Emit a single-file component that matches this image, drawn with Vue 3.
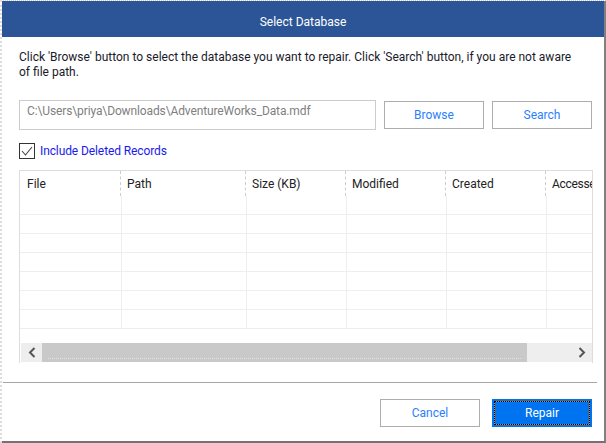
<template>
  <div class="page">
    <div class="dialog">
      <div class="title-bar">Select Database</div>

      <div class="content">
        <p class="intro">Click 'Browse' button to select the database you want to repair. Click 'Search' button, if you are not aware of file path.</p>

        <div class="path-row">
          <input class="path-input" type="text" :value="filePath" readonly />
          <button class="btn browse">Browse</button>
          <button class="btn search">Search</button>
        </div>

        <label class="deleted-check">
          <span class="check-box">
            <svg width="14" height="14" viewBox="0 0 14 14">
              <path d="M2 7 L5.5 11 L12 3" fill="none" stroke="#444" stroke-width="1.1" />
            </svg>
          </span>
          <span>Include Deleted Records</span>
        </label>

        <div class="grid-box">
          <div class="grid-head">
            <div v-for="col in columns" :key="col" class="head-cell">{{ col }}</div>
          </div>
          <div class="grid-body">
            <div v-for="row in 7" :key="row" class="grid-row">
              <div v-for="col in columns" :key="col" class="body-cell"></div>
            </div>
          </div>
          <div class="scroll-bar">
            <div class="scroll-btn">
              <svg width="8" height="11" viewBox="0 0 8 11">
                <path d="M6.5 1 L2 5.5 L6.5 10" fill="none" stroke="#555" stroke-width="2" />
              </svg>
            </div>
            <div class="scroll-thumb"><div class="thumb-dots"></div></div>
            <div class="scroll-rest"></div>
            <div class="scroll-btn">
              <svg width="8" height="11" viewBox="0 0 8 11">
                <path d="M1.5 1 L6 5.5 L1.5 10" fill="none" stroke="#555" stroke-width="2" />
              </svg>
            </div>
          </div>
        </div>
      </div>

      <div class="footer">
        <button class="btn cancel">Cancel</button>
        <button class="btn repair"><span class="focus-ring">Repair</span></button>
      </div>
    </div>
  </div>
</template>

<script setup>
const filePath = 'C:\\Users\\priya\\Downloads\\AdventureWorks_Data.mdf';
const columns = ['File', 'Path', 'Size (KB)', 'Modified', 'Created', 'Accessed'];
</script>

<style scoped>
.page {
  width: 606px;
  height: 443px;
  box-sizing: border-box;
  border-top: 1px dotted #ccc;
  border-left: 2px dotted #ddd;
}

.dialog {
  width: 604px;
  height: 442px;
  box-sizing: border-box;
  background: #fff;
  border-right: 2px solid #808080;
  border-bottom: 2px solid #737373;
  display: flex;
  flex-direction: column;
  font-family: Roboto, "Noto Sans", sans-serif;
  font-size: 12px;
  color: #222;
}

.title-bar {
  height: 36px;
  flex: none;
  background: #2b5597;
  color: #fff;
  text-align: center;
  line-height: 43px;
}

.content {
  padding: 13px 8px 0 17px;
}

.intro {
  margin: 0;
  line-height: 15px;
  color: #1a1a2a;
  width: 565px;
}

.path-row {
  display: flex;
  align-items: center;
  margin-top: 20px;
}

.path-input {
  width: 357px;
  height: 30px;
  box-sizing: border-box;
  border: 1px solid #ccc;
  padding: 0 0 8px 7px;
  font: inherit;
  letter-spacing: -0.12px;
  color: #808080;
  outline: none;
}

.btn {
  width: 100px;
  height: 28px;
  box-sizing: border-box;
  background: #fff;
  border: 1px solid #adadad;
  color: #2a7fff;
  font: inherit;
  padding: 0;
}

.browse {
  margin-left: 8px;
}

.search {
  margin-left: 8px;
}

.deleted-check {
  display: flex;
  align-items: center;
  gap: 5px;
  margin-top: 13px;
  color: #1a1aee;
  letter-spacing: -0.1px;
}

.check-box {
  width: 16px;
  height: 16px;
  box-sizing: border-box;
  border: 1px solid #333;
  display: block;
}

.check-box svg {
  display: block;
}

.grid-box {
  margin-top: 11px;
  width: 574px;
  height: 193px;
  box-sizing: border-box;
  border: 1px solid #ddd;
  border-bottom: none;
  overflow: hidden;
}

.grid-head {
  display: grid;
  grid-template-columns: 101px 125px 100px 100px 100px 100px;
  height: 25px;
}

.head-cell {
  padding-left: 6px;
  line-height: 27px;
  white-space: nowrap;
  overflow: hidden;
  border-right: 1px dashed #ccc;
  color: #222;
}

.head-cell:first-child {
  padding-left: 7px;
}

.head-cell:last-child {
  border-right: none;
  letter-spacing: -0.3px;
}

.grid-body {
  height: 147px;
  overflow: hidden;
}

.grid-row {
  display: grid;
  grid-template-columns: 102px 125px 100px 100px 100px 100px;
  height: 19px;
  box-sizing: border-box;
  border-bottom: 1px solid #eee;
}

.body-cell {
  border-right: 1px solid #eee;
}

.scroll-bar {
  display: flex;
  height: 19px;
  margin-left: 1px;
  background: #eee;
}

.scroll-btn {
  width: 21px;
  display: flex;
  align-items: center;
  justify-content: center;
  flex: none;
}

.scroll-thumb {
  width: 485px;
  height: 19px;
  box-sizing: border-box;
  padding: 15px 6px 0;
  background: #c9c9c9;
}

.thumb-dots {
  border-top: 1px dotted #e2e2e2;
}

.scroll-rest {
  flex: 1;
}

.footer {
  margin-top: 19px;
  flex: 1;
  margin-left: 1px;
  margin-right: 7px;
  border-top: 1px solid #a6a6a6;
  display: flex;
  justify-content: flex-end;
  align-items: flex-start;
  gap: 12px;
  padding: 16px 5px 0 0;
}

.cancel {
  color: #2a7fff;
}

.repair {
  background: #0073f0;
  border: 2px solid #0073f0;
  color: #fff;
}

.focus-ring {
  display: block;
  height: 100%;
  line-height: 22px;
  box-sizing: border-box;
  border: 1px dotted #000;
  background: linear-gradient(#0073f0, #0073f0) padding-box, #f08000 border-box;
}
</style>

<style>
html, body {
  background: #fff;
  overflow: hidden;
}
</style>
